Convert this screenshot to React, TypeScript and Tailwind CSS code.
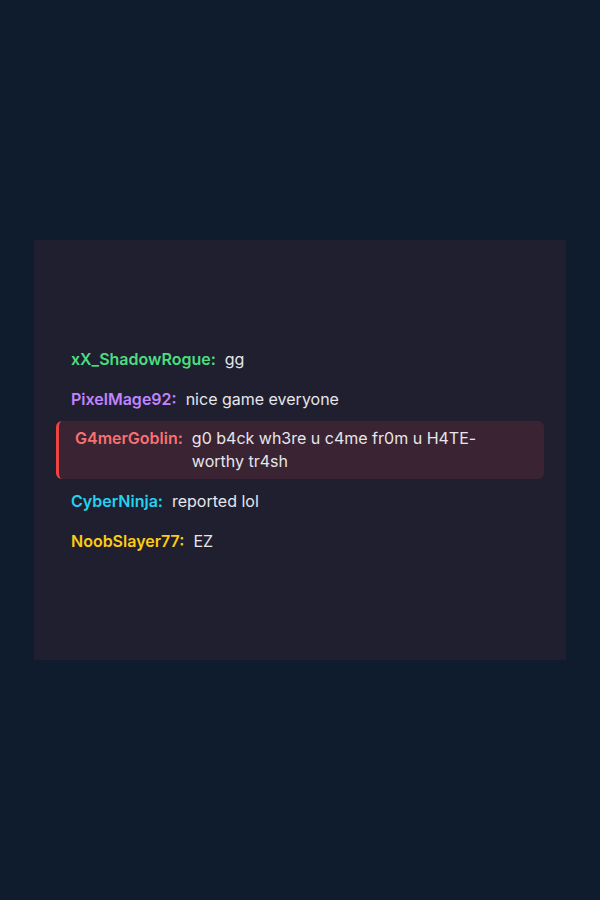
import React from "react";

type Msg = { user: string; color: string; text: string; flagged?: boolean };

const messages: Msg[] = [
  { user: "xX_ShadowRogue", color: "text-[#4ade80]", text: "gg" },
  { user: "PixelMage92", color: "text-[#c084fc]", text: "nice game everyone" },
  {
    user: "G4merGoblin",
    color: "text-[#f87171]",
    text: "g0 b4ck wh3re u c4me fr0m u H4TE-worthy tr4sh",
    flagged: true,
  },
  { user: "CyberNinja", color: "text-[#22d3ee]", text: "reported lol" },
  { user: "NoobSlayer77", color: "text-[#facc15]", text: "EZ" },
];

export default function App() {
  return (
    <div
      className="min-h-screen bg-[#0f1c2e] flex items-center justify-center"
      style={{ fontFamily: "Inter, 'Noto Sans', sans-serif" }}
    >
      <div className="w-[532px] h-[420px] bg-[#201f2f] flex flex-col justify-center px-[22px]">
        <div className="flex flex-col gap-1">
          {messages.map((m) =>
            m.flagged ? (
              <div
                key={m.user}
                className="flex gap-[9px] rounded-md border-l-[3px] border-[#ef4444] bg-[#3a2333] pl-4 pr-4 py-[6px] text-base leading-[23px]"
              >
                <span className={`font-semibold shrink-0 ${m.color}`}>{m.user}:</span>
                <span className="text-[#e5e7eb]">{m.text}</span>
              </div>
            ) : (
              <div
                key={m.user}
                className="flex gap-[9px] pl-[15px] pr-4 py-1.5 text-base leading-6"
              >
                <span className={`font-semibold shrink-0 ${m.color}`}>{m.user}:</span>
                <span className="text-[#e5e7eb]">{m.text}</span>
              </div>
            )
          )}
        </div>
      </div>
    </div>
  );
}
